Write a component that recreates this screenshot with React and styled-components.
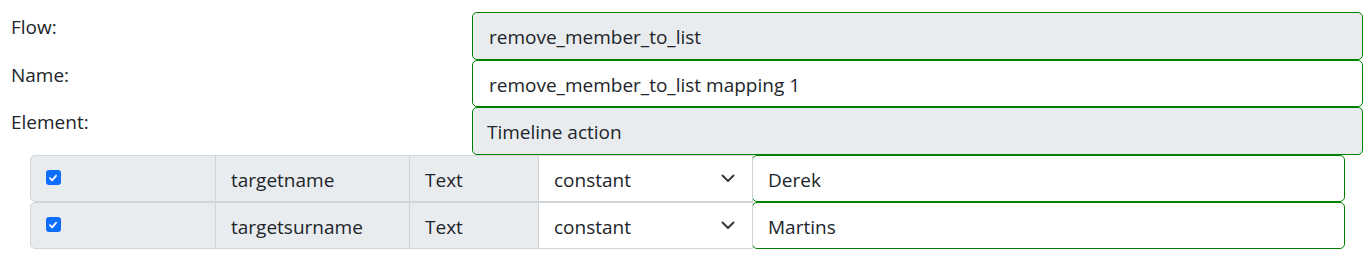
import React from "react";
import styled, { createGlobalStyle } from "styled-components";

const Global = createGlobalStyle`
  html, body { margin: 0; padding: 0; background: #fff; }
  body {
    font-family: "Open Sans", "Noto Sans", sans-serif;
    font-size: 20px;
    color: #212529;
  }
  * { box-sizing: border-box; }
`;

const Page = styled.div`
  padding-top: 12px;
`;

const FormRow = styled.div`
  display: grid;
  grid-template-columns: 472px 1fr;
  height: 47.5px;
`;

const Label = styled.label`
  padding-left: 11px;
  padding-top: 0;
  line-height: 30px;
  font-size: 19px;
`;

const Field = styled.input`
  display: block;
  width: 100%;
  height: 47.5px;
  padding: 9px 15px 6px;
  padding-left: ${(p) => (p.$tight ? "14px" : "16px")};
  font: inherit;
  font-size: 19px;
  line-height: 30px;
  color: #212529;
  background: ${(p) => (p.readOnly ? "#e9ecef" : "#fff")};
  border: 1px solid #008000;
  border-radius: 5px;
  outline: none;
`;

const MapRows = styled.div`
  padding: 0 18px 0 30px;
`;

const MapRow = styled.div`
  display: flex;
  height: 47px;
`;

const Cell = styled.div`
  flex: 0 0 ${(p) => p.$w}px;
  display: flex;
  align-items: center;
  padding: 3px 15px 0;
  margin-left: ${(p) => (p.$first ? "0" : "-1px")};
  background: #e9ecef;
  border: 1px solid #ced4da;
  border-radius: ${(p) => (p.$first ? "5px 0 0 5px" : "0")};
  font-size: 19px;
  line-height: 30px;
`;

const Check = styled.span`
  display: inline-flex;
  align-items: center;
  justify-content: center;
  width: 14.5px;
  height: 14.5px;
  border-radius: 3px;
  background: #0d6efd;
  margin-top: -4px;
`;

const SelectWrap = styled.div`
  position: relative;
  flex: 0 0 215px;
  margin-left: -1px;
`;

const Select = styled.select`
  appearance: none;
  width: 100%;
  height: 100%;
  padding: 3px 40px 0 15px;
  font: inherit;
  font-size: 19px;
  color: #212529;
  background: #fff;
  border: 1px solid #ced4da;
  border-radius: 0;
  outline: none;
`;

const Chevron = styled.svg`
  position: absolute;
  right: 18px;
  top: 50%;
  margin-top: -4px;
  pointer-events: none;
`;

const ValueInput = styled.input`
  flex: 1 1 auto;
  min-width: 0;
  margin-left: -1px;
  padding: 3px 15px 0;
  font: inherit;
  font-size: 19px;
  color: #212529;
  background: #fff;
  border: 1px solid #008000;
  border-radius: 5px;
  outline: none;
`;

const rows = [
  { name: "targetname", type: "Text", value: "Derek" },
  { name: "targetsurname", type: "Text", value: "Martins" },
];

export default function App() {
  return (
    <>
      <Global />
      <Page>
        <FormRow>
          <Label>Flow:</Label>
          <Field readOnly value="remove_member_to_list" />
        </FormRow>
        <FormRow>
          <Label>Name:</Label>
          <Field defaultValue="remove_member_to_list mapping 1" />
        </FormRow>
        <FormRow>
          <Label>Element:</Label>
          <Field readOnly $tight value="Timeline action" />
        </FormRow>
        <MapRows>
          {rows.map((r) => (
            <MapRow key={r.name}>
              <Cell $first $w={186}>
                <Check role="checkbox" aria-checked="true">
                  <svg width="10" height="10" viewBox="0 0 10 10">
                    <path d="M2 5.2 L4.1 7.3 L8 2.8" fill="none" stroke="#fff" strokeWidth="1.8" strokeLinecap="round" strokeLinejoin="round" />
                  </svg>
                </Check>
              </Cell>
              <Cell $w={195}>{r.name}</Cell>
              <Cell $w={130}>{r.type}</Cell>
              <SelectWrap>
                <Select defaultValue="constant">
                  <option value="constant">constant</option>
                </Select>
                <Chevron width="14" height="9" viewBox="0 0 14 9">
                  <path d="M1.5 1.5 L7 7 L12.5 1.5" fill="none" stroke="#343a40" strokeWidth="2" strokeLinecap="round" strokeLinejoin="round" />
                </Chevron>
              </SelectWrap>
              <ValueInput defaultValue={r.value} />
            </MapRow>
          ))}
        </MapRows>
      </Page>
    </>
  );
}
